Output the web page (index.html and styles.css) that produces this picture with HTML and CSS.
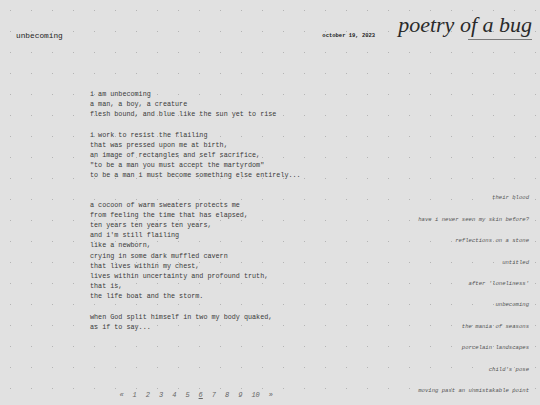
FILE: index.html
```html
<!DOCTYPE html>
<html>
<head>
<meta charset="utf-8">
<link rel="stylesheet" href="styles.css">
</head>
<body>
<div class="page">
  <header class="header">
    <div class="brand">unbecoming</div>
    <div class="date">october 19, 2023</div>
    <div class="titleblock">
      <div class="title">poetry of a bug</div>
      <div class="rule"></div>
    </div>
  </header>
  <main class="main">
    <div class="left">
      <article class="poem">
        <section class="part">
          <p>i am unbecoming<br>a man, a boy, a creature<br>flesh bound, and blue like the sun yet to rise</p>
          <p>i work to resist the flailing<br>that was pressed upon me at birth,<br>an image of rectangles and self sacrifice,<br>"to be a man you must accept the martyrdom"<br>to be a man i must become something else entirely...</p>
        </section>
        <section class="part">
          <p>a cocoon of warm sweaters protects me<br>from feeling the time that has elapsed,<br>ten years ten years ten years,<br>and i'm still flailing<br>like a newborn,<br>crying in some dark muffled cavern<br>that lives within my chest,<br>lives within uncertainty and profound truth,<br>that is,<br>the life boat and the storm.</p>
          <p>when God split himself in two my body quaked,<br>as if to say...</p>
        </section>
      </article>
      <nav class="pager">
        <span>«</span><span>1</span><span>2</span><span>3</span><span>4</span><span>5</span><span class="current">6</span><span>7</span><span>8</span><span>9</span><span>10</span><span>»</span>
      </nav>
    </div>
    <aside class="sidebar">
      <div>their blood</div>
      <div>have i never seen my skin before?</div>
      <div>reflections on a stone</div>
      <div>untitled</div>
      <div>after 'loneliness'</div>
      <div>unbecoming</div>
      <div>the mania of seasons</div>
      <div>porcelain landscapes</div>
      <div>child's pose</div>
      <div>moving past an unmistakable point</div>
    </aside>
  </main>
</div>
</body>
</html>
```
FILE: styles.css
```css
html, body {
  margin: 0;
  padding: 0;
}
body {
  background-color: #e1e1e1;
  background-image: radial-gradient(circle at center, #b4b4b4 0 0.6px, rgba(180,180,180,0) 1px);
  background-size: 21px 21px;
  background-position: 0 0;
}
.page {
  width: 540px;
  height: 405px;
  overflow: hidden;
  display: flex;
  flex-direction: column;
  font-family: "Liberation Mono", "DejaVu Sans Mono", monospace;
}
.header {
  height: 45px;
  flex: none;
  display: flex;
  align-items: flex-start;
  padding: 0 8px 0 16px;
  box-sizing: border-box;
}
.brand {
  margin-top: 31px;
  font-size: 7.8px;
  line-height: 10px;
  color: #1e1e1e;
}
.date {
  margin-top: 31px;
  margin-left: auto;
  font-size: 5.5px;
  line-height: 10px;
  font-weight: bold;
  color: #222;
}
.titleblock {
  margin-left: 23px;
  margin-top: 14px;
  display: flex;
  flex-direction: column;
  align-items: flex-end;
}
.title {
  font-family: "Liberation Serif", "DejaVu Serif", serif;
  font-style: italic;
  font-size: 22px;
  line-height: 22px;
  color: #2a2a2a;
  white-space: nowrap;
}
.rule {
  width: 64px;
  height: 1px;
  background: #7a7a7a;
  margin-top: 3px;
}
.main {
  flex: 1;
  display: flex;
  padding: 0 11px 5px 90px;
  min-height: 0;
}
.left {
  flex: 1;
  display: flex;
  flex-direction: column;
}
.poem {
  margin-top: 44px;
  font-size: 6.75px;
  line-height: 10.2px;
  color: #3a3a3a;
}
.poem p {
  margin: 0 0 10px 0;
  white-space: nowrap;
}
.part + .part {
  margin-top: 19px;
}
.pager {
  margin-top: auto;
  margin-left: 29.4px;
  display: flex;
  gap: 9px;
  font-size: 7px;
  line-height: 10px;
  font-style: italic;
  color: #666;
}
.pager .current {
  text-decoration: underline;
}
.sidebar {
  margin-top: 142.3px;
  text-align: right;
  font-size: 5.6px;
  line-height: 21.44px;
  font-style: italic;
  color: #555;
  white-space: nowrap;
}
```
